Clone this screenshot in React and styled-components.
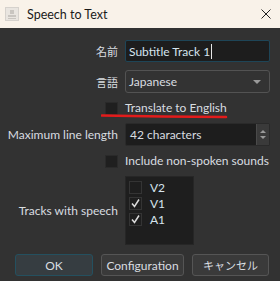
import React from "react";
import styled, { createGlobalStyle } from "styled-components";

const Global = createGlobalStyle`
  html, body { margin: 0; padding: 0; background: #323232; }
  body { font-family: Lato, "Noto Sans CJK JP", sans-serif; }
`;

const Window = styled.div`
  width: 280px;
  height: 281px;
  background: #323232;
  display: flex;
  flex-direction: column;
  overflow: hidden;
`;

const TitleBar = styled.div`
  height: 28px;
  flex: none;
  background: #f9f2e9;
  display: flex;
  align-items: center;
  padding: 0 9px 0 5px;
  color: #1a1a1a;
  font-size: 12.5px;
`;

const TitleText = styled.span`
  margin-left: 8px;
  flex: 1;
`;

const Body = styled.div`
  padding: 12px 10px 0 8px;
  display: grid;
  grid-template-columns: 110px minmax(0, 1fr);
  column-gap: 7px;
  grid-template-rows: 22px 23px 14px 23px 14px 69px;
  row-gap: 8px;
`;

const Label = styled.div`
  justify-self: end;
  align-self: center;
  color: #d9dde0;
  font-size: ${({ cjk }) => (cjk ? "11px" : "12px")};
  line-height: 14px;
  white-space: nowrap;
  font-family: ${({ cjk }) => (cjk ? '"Noto Sans CJK JP", sans-serif' : 'Lato, sans-serif')};
`;

const TextInput = styled.div`
  background: #1d1d1d;
  border: 1px solid #1e4557;
  border-radius: 2px;
  color: #d6e4ee;
  font-size: 12px;
  display: flex;
  align-items: center;
  padding: 0 3px;
`;

const Caret = styled.span`
  display: inline-block;
  width: 1px;
  height: 15px;
  background: #e6e6e6;
  margin-left: 1px;
`;

const Combo = styled.div`
  background: #333333;
  border: 1px solid #535353;
  border-radius: 3px;
  color: #d9dde0;
  font-size: 12px;
  display: flex;
  align-items: center;
  padding: 0 8px 0 3px;
  justify-content: space-between;
`;

const Arrow = styled.span`
  width: 0;
  height: 0;
  border-left: 4px solid transparent;
  border-right: 4px solid transparent;
  border-top: 4px solid #9a9a9a;
`;

const Box = styled.div`
  width: 13px;
  height: 13px;
  box-sizing: border-box;
  background: ${({ flat }) => (flat ? "transparent" : "#1f1f1f")};
  border: 1px solid ${({ flat }) => (flat ? "#343434" : "#2a2a2a")};
  justify-self: end;
  align-self: center;
  display: flex;
  align-items: center;
  justify-content: center;
`;

const CheckText = styled.div`
  position: relative;
  align-self: center;
  color: #d9dde0;
  font-size: 12px;
  line-height: 14px;
  white-space: nowrap;
`;

const Underline = styled.svg`
  position: absolute;
  left: -24px;
  top: 12px;
`;

const Spin = styled.div`
  background: #1d1d1d;
  border: 1px solid #2a2a2a;
  border-radius: 2px;
  display: flex;
  color: #d9dde0;
  font-size: 12px;
`;

const SpinValue = styled.div`
  flex: 1;
  display: flex;
  align-items: center;
  padding-left: 4px;
`;

const SpinButtons = styled.div`
  width: 12px;
  background: #3a3a3a;
  border-left: 1px solid #4a4a4a;
  display: flex;
  flex-direction: column;
  align-items: center;
  justify-content: center;
  gap: 3px;
`;

const Tri = styled.span`
  width: 0;
  height: 0;
  border-left: 3px solid transparent;
  border-right: 3px solid transparent;
  ${({ up }) => (up ? "border-bottom: 3px solid #9a9a9a;" : "border-top: 3px solid #9a9a9a;")}
`;

const List = styled.div`
  width: 69px;
  background: #1e1e1e;
  border: 1px solid #262626;
  box-sizing: border-box;
  padding: 3px 3px;
  display: flex;
  flex-direction: column;
  gap: 2px;
`;

const ListItem = styled.div`
  display: flex;
  align-items: center;
  gap: 8px;
  height: 14px;
  color: #d6e4ee;
  font-size: 12px;
`;

const Buttons = styled.div`
  display: flex;
  padding: 9px 10px 0 15px;
  gap: 8px;
`;

const Button = styled.div`
  width: ${({ w }) => w}px;
  height: 22px;
  box-sizing: border-box;
  border: 1px solid ${({ primary }) => (primary ? "#24505f" : "#555555")};
  background: ${({ primary }) => (primary ? "#363d41" : "#3a3a3a")};
  border-radius: 3px;
  display: flex;
  align-items: center;
  justify-content: center;
  color: #d9dde0;
  font-size: ${({ cjk }) => (cjk ? "11px" : "12px")};
  font-family: ${({ cjk }) => (cjk ? '"Noto Sans CJK JP", sans-serif' : 'Lato, sans-serif')};
`;

const Tick = () => (
  <svg width="11" height="11" viewBox="0 0 11 11">
    <path d="M2 5.5 L4.5 8.5 L9 1.5" fill="none" stroke="#dcdcdc" strokeWidth="1.5" />
  </svg>
);

const AppIcon = () => (
  <svg width="14" height="14" viewBox="0 0 14 14">
    <rect x="0.5" y="0.5" width="13" height="13" fill="#e9e5e0" stroke="#d6d2cd" />
    <rect x="5" y="3" width="4" height="4" fill="#c9c5c0" />
    <rect x="3" y="8" width="8" height="2" fill="#c9c5c0" />
    <rect x="3" y="11" width="8" height="1" fill="#c9c5c0" />
  </svg>
);

const Close = () => (
  <svg width="10" height="10" viewBox="0 0 10 10">
    <path d="M0.5 0.5 L9.5 9.5 M9.5 0.5 L0.5 9.5" stroke="#222" strokeWidth="1" />
  </svg>
);

const tracks = [
  { name: "V2", on: false },
  { name: "V1", on: true },
  { name: "A1", on: true }
];

const App = () => (
  <Window>
    <Global />
    <TitleBar>
      <AppIcon />
      <TitleText>Speech to Text</TitleText>
      <Close />
    </TitleBar>
    <Body>
      <Label cjk>名前</Label>
      <TextInput>
        Subtitle Track 1<Caret />
      </TextInput>

      <Label cjk>言語</Label>
      <Combo>
        Japanese
        <Arrow />
      </Combo>

      <Box />
      <CheckText>
        Translate to English
        <Underline width="130" height="6" viewBox="0 0 130 6">
          <path d="M1 2.5 Q60 3.5 125 4" fill="none" stroke="#e21b1b" strokeWidth="2.6" strokeLinecap="round" />
        </Underline>
      </CheckText>

      <Label>Maximum line length</Label>
      <Spin>
        <SpinValue>42 characters</SpinValue>
        <SpinButtons>
          <Tri up />
          <Tri />
        </SpinButtons>
      </Spin>

      <Box />
      <CheckText>Include non-spoken sounds</CheckText>

      <Label>Tracks with speech</Label>
      <List>
        {tracks.map(t => (
          <ListItem key={t.name}>
            <Box flat>{t.on && <Tick />}</Box>
            {t.name}
          </ListItem>
        ))}
      </List>
    </Body>
    <Buttons>
      <Button w={78} primary>OK</Button>
      <Button w={83}>Configuration</Button>
      <Button w={77} cjk>キャンセル</Button>
    </Buttons>
  </Window>
);

export default App;
